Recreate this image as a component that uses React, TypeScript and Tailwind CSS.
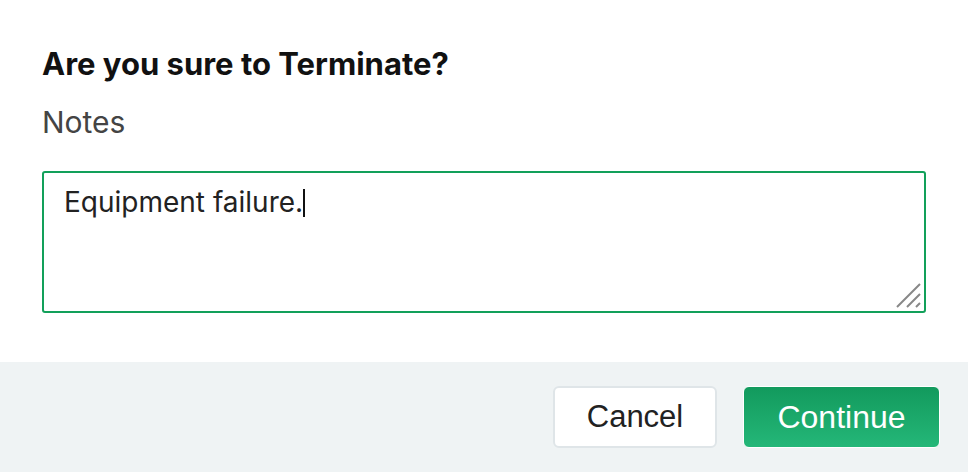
import React from 'react';

const App: React.FC = () => {
  return (
    <div className="w-[968px] h-[472px] bg-white flex flex-col" style={{ fontFamily: 'Inter, "Noto Sans", sans-serif' }}>
      <div className="flex-1 px-[42px] pt-[46px]">
        <h2 className="text-[31px] leading-[36px] font-bold text-[#111]">Are you sure to Terminate?</h2>
        <p className="mt-[22px] text-[30px] leading-[36px] text-[#444]">Notes</p>
        <div className="relative mt-[31px] h-[142px] border-2 border-[#12a05a] rounded-[3px] px-[20px] pt-[12px]">
          <span className="text-[28px] leading-[34px] text-[#222]">Equipment failure.</span>
          <span className="inline-block w-[2px] h-[28px] bg-[#111] align-[-5px]" />
          <svg className="absolute right-[2px] bottom-[2px]" width="28" height="28" viewBox="0 0 28 28">
            <path d="M3 26 L26 3 M13 26 L26 13 M22 26 L26 22" stroke="#888" strokeWidth="2" />
          </svg>
        </div>
      </div>
      <div className="h-[110px] bg-[#eff3f4] flex items-center justify-end gap-[26px] pr-[28px]" style={{ fontFamily: '"Liberation Sans", Arial, sans-serif' }}>
        <button className="w-[164px] h-[62px] bg-white border-2 border-[#dfe5e8] rounded-[6px] text-[31px] text-[#222]">Cancel</button>
        <button className="w-[197px] h-[62px] rounded-[6px] border border-white bg-gradient-to-b from-[#129a5d] to-[#24b778] text-[32px] text-white">Continue</button>
      </div>
    </div>
  );
};

export default App;
